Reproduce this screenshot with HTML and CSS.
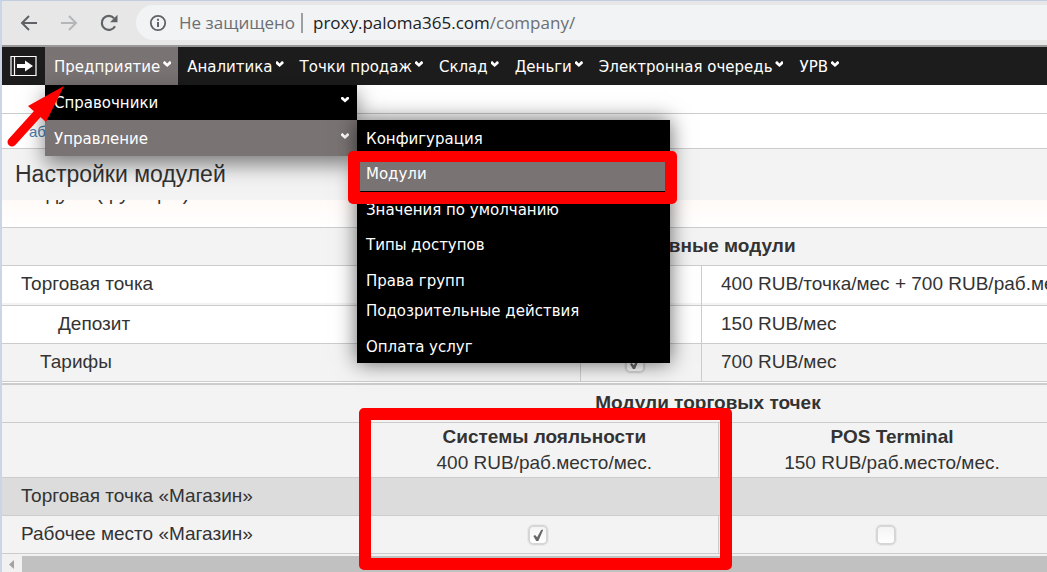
FILE: index.html
```html
<!DOCTYPE html>
<html lang="ru">
<head>
<meta charset="utf-8">
<title>Настройки модулей</title>
<link rel="stylesheet" href="styles.css">
</head>
<body>
<div class="window">
  <header class="browser-bar">
    <button class="tool" type="button" aria-label="Назад">
      <svg width="18" height="16" viewBox="0 0 18 16" fill="none" stroke="#5f6368" stroke-width="2"><path d="M17 8H2M9 1 2 8l7 7"/></svg>
    </button>
    <button class="tool" type="button" aria-label="Вперёд">
      <svg width="18" height="16" viewBox="0 0 18 16" fill="none" stroke="#b4b6b8" stroke-width="2"><path d="M1 8h15M9 1l7 7-7 7"/></svg>
    </button>
    <button class="tool" type="button" aria-label="Обновить">
      <svg width="18" height="18" viewBox="0 0 18 18"><path d="M15 12.2A7 7 0 1 1 14 4.2" fill="none" stroke="#5f6368" stroke-width="2.2"/><path d="M17.5.8v7.4H10z" fill="#5f6368"/></svg>
    </button>
    <div class="omnibox">
      <svg class="info" width="18" height="18" viewBox="0 0 18 18"><circle cx="9" cy="9" r="7.2" fill="none" stroke="#5f6368" stroke-width="1.8"/><path d="M8 8h2v5H8zM8 4.8h2v2H8z" fill="#5f6368"/></svg>
      <span class="insecure">Не защищено</span>
      <span class="divider"></span>
      <span class="url">proxy.paloma365.com<span class="path">/company/</span></span>
    </div>
  </header>

  <nav class="nav">
    <a class="nav-logo" href="#" aria-label="Выход">
      <svg width="27" height="20" viewBox="0 0 27 20"><path d="M1 .5h25v19H1zM4.500 .5v19" fill="none" stroke="#fff" stroke-width="1.200"/><path d="M7 8h8V4.500l8 5.500-8 5.500V12H7z" fill="#fff"/></svg>
    </a>
    <div class="nav-group">
      <a class="nav-item active" href="#">Предприятие <i class="caret"></i></a>
      <div class="menu menu-main">
        <a class="menu-item" href="#">Справочники <i class="caret"></i></a>
        <a class="menu-item active" href="#">Управление <i class="caret"></i></a>
        <div class="menu menu-sub">
          <a class="menu-item" href="#">Конфигурация</a>
          <a class="menu-item active" href="#">Модули</a>
          <a class="menu-item" href="#">Значения по умолчанию</a>
          <a class="menu-item" href="#">Типы доступов</a>
          <a class="menu-item" href="#">Права групп</a>
          <a class="menu-item short" href="#">Подозрительные действия</a>
          <a class="menu-item" href="#">Оплата услуг</a>
        </div>
      </div>
    </div>
    <a class="nav-item" href="#">Аналитика <i class="caret"></i></a>
    <a class="nav-item" href="#">Точки продаж <i class="caret"></i></a>
    <a class="nav-item" href="#">Склад <i class="caret"></i></a>
    <a class="nav-item" href="#">Деньги <i class="caret"></i></a>
    <a class="nav-item" href="#">Электронная очередь <i class="caret"></i></a>
    <a class="nav-item" href="#">УРВ <i class="caret"></i></a>
  </nav>

  <main class="page">
    <div class="spacer"></div>
    <div class="tabs"><a href="#">аб</a></div>
    <h1 class="title">Настройки модулей</h1>
    <div class="caption"><p>Модули (функции)</p></div>
    <div class="tables">
      <table class="grid core">
        <colgroup><col class="c-name"><col class="c-tick"><col></colgroup>
        <thead><tr class="tint"><th colspan="3">Основные модули</th></tr></thead>
        <tbody>
          <tr class="first"><td>Торговая точка</td><td></td><td class="price">400 RUB/точка/мес + 700 RUB/раб.место/мес</td></tr>
          <tr><td class="level-2">Депозит</td><td></td><td class="price">150 RUB/мес</td></tr>
          <tr class="tint"><td class="level-1">Тарифы</td><td class="tick"><input type="checkbox" checked aria-label="Тарифы"></td><td class="price">700 RUB/мес</td></tr>
        </tbody>
      </table>
      <table class="grid points">
        <colgroup><col class="p-name"><col><col><col></colgroup>
        <thead>
          <tr class="tint"><th colspan="4">Модули торговых точек</th></tr>
          <tr class="tint plans"><td></td><th>Системы лояльности<small>400 RUB/раб.место/мес.</small></th><th>POS Terminal<small>150 RUB/раб.место/мес.</small></th><td></td></tr>
        </thead>
        <tbody>
          <tr class="group"><td colspan="4">Торговая точка «Магазин»</td></tr>
          <tr class="tint place"><td>Рабочее место «Магазин»</td><td class="tick"><input type="checkbox" checked aria-label="Системы лояльности"></td><td class="tick"><input type="checkbox" aria-label="POS Terminal"></td><td></td></tr>
        </tbody>
      </table>
    </div>
    <div class="scrollbar">
      <svg width="20" height="16" viewBox="0 0 20 16"><path d="M12 4v9L7 8.500z" fill="#a3a3a3"/></svg>
      <span class="thumb"></span>
    </div>
  </main>

  <div class="mark mark-menu"></div>
  <div class="mark mark-loyalty"></div>
  <svg class="arrow" width="70" height="70" viewBox="0 0 70 70"><path d="M12 62 41 30" stroke="#f00" stroke-width="9" stroke-linecap="round"/><path d="M64 6 28 26l18 16z" fill="#f00"/></svg>
</div>
</body>
</html>
```
FILE: styles.css
```css
* { box-sizing: border-box; }
body {
  margin: 0;
  background: #fff;
  color: #333;
  font-family: "Liberation Sans", Arial, sans-serif;
  font-size: 19px;
}
a { color: inherit; text-decoration: none; }
.window {
  position: relative;
  min-height: 100vh;
  border-top: 1px solid #c3cde2;
  border-left: 2px solid #cad5e8;
  overflow: hidden;
}

.browser-bar {
  display: flex;
  align-items: center;
  height: 46px;
  padding: 4px 0 5px 17px;
  border-bottom: 2px solid #999;
  background: #e7e7e7;
}
.tool {
  display: flex;
  align-items: center;
  justify-content: center;
  width: 20px;
  height: 28px;
  margin-right: 20px;
  padding: 0;
  border: 0;
  background: none;
}
.tool:nth-child(3) { margin-right: 17px; }
.omnibox {
  display: flex;
  flex: 1;
  align-items: center;
  height: 35px;
  padding-left: 13px;
  border-radius: 18px 0 0 18px;
  background: #f1f3f4;
  color: #202124;
  font-family: "Open Sans", "Noto Sans", sans-serif;
  font-size: 17px;
  white-space: nowrap;
}
.insecure { margin-left: 12px; color: #6b6e72; }
.divider { width: 2px; height: 20px; margin: 0 10px 0 6px; background: #9c9fa2; }
.path { color: #6b6e72; }

.nav {
  display: flex;
  height: 38px;
  background: #1c1c1c;
  color: #fff;
  font-family: "DejaVu Sans", Verdana, sans-serif;
  font-size: 15px;
  white-space: nowrap;
}
.nav-logo { display: flex; align-items: center; padding: 0 8px; }
.nav-group { position: relative; display: flex; }
.nav-item {
  display: flex;
  gap: 3px;
  align-items: center;
  padding: 2px 7px 0 9px;
}
.active { background: #7a7373; }
.caret { width: 8px; height: 6px; margin-bottom: 6px; background: #fff; clip-path: polygon(0 15%, 20% 0, 50% 40%, 80% 0, 100% 15%, 100% 40%, 50% 100%, 0 40%); }
.menu {
  position: absolute;
  z-index: 2;
  width: 312px;
  background: #000;
  box-shadow: 0 0 20px rgba(0, 0, 0, .6);
}
.menu-main { top: 100%; left: 0; box-shadow: 0 8px 20px rgba(0, 0, 0, .5); }
.menu-sub { top: 35px; left: 100%; width: 313px; }
.menu-item {
  display: flex;
  align-items: center;
  justify-content: space-between;
  height: 36px;
  padding: 2px 8px 0 9px;
}
.menu-item:nth-child(odd) { height: 35px; }
.menu-main > .menu-item:first-child { padding-top: 0; }
.menu-sub .menu-item.short { height: 31px; padding: 0 8px 3px 9px; }

.spacer { height: 29px; border-bottom: 1px solid #ccc; }
.tabs { height: 35px; padding: 9px 27px; border-bottom: 1px solid #ccc; color: #4a7db0; font-size: 15px; line-height: 18px; }
.title { height: 51px; margin: 0; padding-left: 13px; background: #f3f3f3; font-size: 23px; font-weight: 400; line-height: 50px; }
.caption { height: 27px; padding-left: 17px; overflow: hidden; background: linear-gradient(#fffaf7, #fff); }
.caption p { margin: -18px 0 0; font-size: 20px; line-height: 22px; }

.tables { overflow: hidden; }
.grid {
  width: 1412px;
  border-collapse: separate;
  border-spacing: 0;
  table-layout: fixed;
  background: #fff;
}
.grid th, .grid td {
  height: 38px;
  padding: 0 19px 2px;
  border-top: 1px solid #ccc;
  line-height: 26px;
  text-align: left;
  white-space: nowrap;
}
.grid th { padding: 0 0 2px; text-align: center; }
.grid .tint { background: #f3f3f3; }
.grid .group { background: #dcdcdc; }
.c-name { width: 578px; }
.c-tick { width: 121px; }
.p-name { width: 369px; }
.core { border-bottom: 1px solid #ccc; }
.core td + td { border-left: 1px solid #ccc; }
.core .first td { height: 40px; padding-bottom: 4px; box-shadow: inset 0 -2px #f3f3f3; }
.grid .level-1 { padding-left: 38px; }
.grid .level-2 { padding-left: 56px; }
.points { margin-top: 1px; border-top: 1px solid #ccc; border-bottom: 1px solid #ccc; }
.grid.points .plans th { height: 55px; padding: 0; border-right: 1px solid #ccc; }
.points small { display: block; font-size: 19px; font-weight: 400; }
.points .place td + td { border-right: 1px solid #ccc; }
.grid td.tick { padding: 0 12px 0 0; text-align: center; }
.tick input {
  appearance: none;
  display: inline-block;
  width: 20px;
  height: 20px;
  margin: 0;
  border: 2px solid #d6d6d6;
  border-radius: 5px;
  outline: 1px solid #eaeaea;
  background: linear-gradient(#f4f4f4, #fff);
  vertical-align: middle;
}
.tick input:checked::before {
  content: "";
  display: block;
  width: 10px;
  height: 12px;
  margin: 2px 3px;
  background: #666;
  clip-path: polygon(0 55%, 18% 45%, 38% 65%, 78% 5%, 100% 0, 48% 100%, 32% 100%);
}

.scrollbar { display: flex; height: 18px; padding-top: 2px; background: #f1f1f1; }
.thumb { flex: 1; background: #c1c1c1; }

.mark { position: absolute; z-index: 5; border: 12px solid #f00; border-radius: 5px; }
.mark-menu { top: 150px; left: 346px; width: 329px; height: 53px; border-top-width: 11px; }
.mark-loyalty { top: 407px; left: 357px; width: 373px; height: 162px; }
.arrow { position: absolute; z-index: 6; top: 79px; left: -2px; }
```
